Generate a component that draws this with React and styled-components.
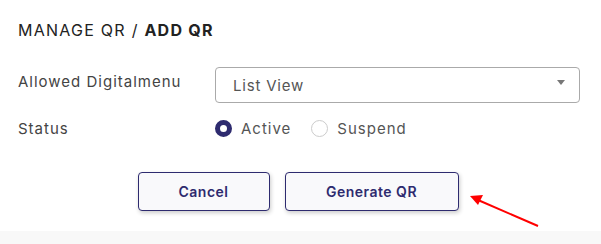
import React from "react";
import styled, { createGlobalStyle } from "styled-components";

const Global = createGlobalStyle`
  html, body { margin: 0; padding: 0; background: #fff; }
  body { font-family: Inter, "Liberation Sans", sans-serif; }
`;

const Page = styled.div`
  position: relative;
  width: 601px;
  height: 244px;
  overflow: hidden;
  background: #fff;
  display: flex;
  flex-direction: column;
`;

const Content = styled.div`
  padding: 20px 21px 0 18px;
  flex: 1;
  display: flex;
  flex-direction: column;
`;

const Title = styled.h1`
  margin: 0;
  font-size: 16px;
  font-weight: 400;
  line-height: 20px;
  color: #222;
  letter-spacing: 1.25px;
  b { font-weight: 700; }
`;

const Form = styled.div`
  margin-top: 27px;
  display: flex;
  flex-direction: column;
  gap: 15px;
`;

const Row = styled.div`
  display: grid;
  grid-template-columns: 197px 1fr;
  align-items: center;
  min-height: ${(p) => p.$h || 36}px;
`;

const Label = styled.div`
  font-size: 15px;
  color: #444;
  letter-spacing: 1px;
  margin-top: ${(p) => (p.$up ? "-8px" : "0")};
`;

const Select = styled.div`
  height: 36px;
  border: 1px solid #aaa;
  border-radius: 4px;
  box-sizing: border-box;
  display: flex;
  align-items: center;
  justify-content: space-between;
  padding: 0 14px 0 17px;
  font-size: 15px;
  letter-spacing: 0.8px;
  color: #555;
`;

const Caret = styled.span`
  width: 0;
  height: 0;
  border-left: 4px solid transparent;
  border-right: 4px solid transparent;
  border-top: 5px solid #777;
  margin-top: -6px;
`;

const Radios = styled.div`
  display: flex;
  align-items: center;
  gap: 20px;
`;

const RadioItem = styled.label`
  display: flex;
  align-items: center;
  gap: 9px;
  font-size: 15px;
  letter-spacing: 1px;
  color: #555;
`;

const Dot = styled.span`
  width: 17px;
  height: 17px;
  box-sizing: border-box;
  border-radius: 50%;
  border: ${(p) => (p.$on ? "5px solid #2e2b6f" : "1px solid #ccc")};
  background: #fff;
`;

const Actions = styled.div`
  margin-top: 34px;
  display: flex;
  justify-content: center;
  gap: 15px;
  padding-right: 2px;
`;

const Button = styled.button`
  width: ${(p) => p.$w}px;
  height: 39px;
  border: 1px solid #2e2b6f;
  border-radius: 4px;
  background: #f9f9fb;
  box-shadow: 1px 2px 4px rgba(0, 0, 0, 0.2);
  color: #2e2b6f;
  font-family: inherit;
  font-size: 14px;
  font-weight: 600;
  letter-spacing: 0.5px;
`;

const Strip = styled.div`
  height: 13px;
  background: #f8f8f8;
`;

const Arrow = styled.svg`
  position: absolute;
  left: 460px;
  top: 185px;
`;

export default function App() {
  return (
    <Page>
      <Global />
      <Content>
        <Title>
          MANAGE QR / <b>ADD QR</b>
        </Title>
        <Form>
          <Row>
            <Label $up>Allowed Digitalmenu</Label>
            <Select>
              List View
              <Caret />
            </Select>
          </Row>
          <Row $h={20}>
            <Label>Status</Label>
            <Radios>
              <RadioItem>
                <Dot $on />
                Active
              </RadioItem>
              <RadioItem>
                <Dot />
                Suspend
              </RadioItem>
            </Radios>
          </Row>
        </Form>
        <Actions>
          <Button $w={132}>Cancel</Button>
          <Button $w={174}>Generate QR</Button>
        </Actions>
      </Content>
      <Strip />
      <Arrow width="90" height="50" viewBox="0 0 90 50">
        <line x1="78" y1="41" x2="18" y2="15" stroke="#f00" strokeWidth="2" />
        <polygon points="10,11 23,10 18,20" fill="#f00" />
      </Arrow>
    </Page>
  );
}
